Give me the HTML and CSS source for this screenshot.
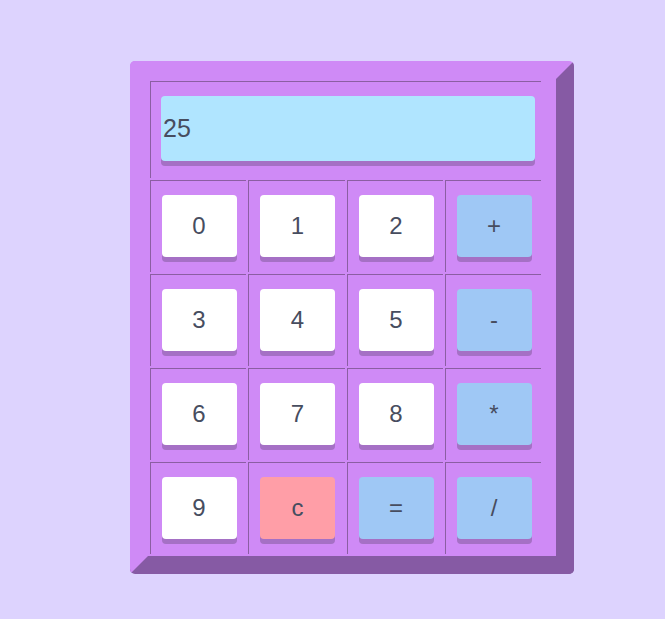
FILE: index.html
```html
<!DOCTYPE html>
<html>
<head>
<meta charset="utf-8">
<link rel="stylesheet" href="styles.css">
</head>
<body>
<div class="stage">
  <div class="calc">
    <table class="grid">
      <tr>
        <td colspan="4" class="screen-cell"><div class="screen">25</div></td>
      </tr>
      <tr>
        <td><span class="key">0</span></td>
        <td class="wide"><span class="key">1</span></td>
        <td><span class="key">2</span></td>
        <td><span class="key op">+</span></td>
      </tr>
      <tr>
        <td><span class="key">3</span></td>
        <td class="wide"><span class="key">4</span></td>
        <td><span class="key">5</span></td>
        <td><span class="key op">-</span></td>
      </tr>
      <tr>
        <td><span class="key">6</span></td>
        <td class="wide"><span class="key">7</span></td>
        <td><span class="key">8</span></td>
        <td><span class="key op">*</span></td>
      </tr>
      <tr>
        <td><span class="key">9</span></td>
        <td class="wide"><span class="key clear">c</span></td>
        <td><span class="key op">=</span></td>
        <td><span class="key op">/</span></td>
      </tr>
    </table>
  </div>
</div>
</body>
</html>
```
FILE: styles.css
```css
html, body {
  margin: 0;
  padding: 0;
  background: #ddd3fe;
  font-family: "Liberation Sans", Arial, sans-serif;
}

.stage {
  padding: 61px 0 0 130px;
}

.calc {
  width: 408px;
  height: 477px;
  border-style: solid;
  border-width: 18px;
  border-color: #cf8af6 #865aa4 #865aa4 #cf8af6;
  border-radius: 5px;
  background: #cf8af6;
}

.grid {
  border-collapse: separate;
  border-spacing: 2px;
}

.grid td {
  width: 95px;
  height: 91px;
  padding: 0;
  border-top: 1px solid #8b5ea2;
  border-left: 1px solid #8b5ea2;
  text-align: center;
  vertical-align: middle;
}

.grid td.wide {
  width: 96px;
}

.grid td.screen-cell {
  height: 82px;
  padding: 14px 0 0 10px;
  text-align: left;
  vertical-align: top;
}

.screen {
  width: 372px;
  height: 65px;
  padding-left: 2px;
  line-height: 65px;
  background: #b0e5ff;
  border-radius: 4px;
  box-shadow: 0 5px 0 #a570c5;
  font-size: 25px;
  color: #474d5f;
}

.key {
  display: inline-block;
  width: 75px;
  height: 62px;
  line-height: 62px;
  margin: 0 0 2px 1px;
  background: #ffffff;
  border-radius: 4px;
  box-shadow: 0 5px 0 #a570c5;
  font-size: 24px;
  color: #474d5f;
  text-align: center;
}

.key.op {
  background: #9fc8f5;
}

.key.clear {
  background: #ff9ea7;
}
```
